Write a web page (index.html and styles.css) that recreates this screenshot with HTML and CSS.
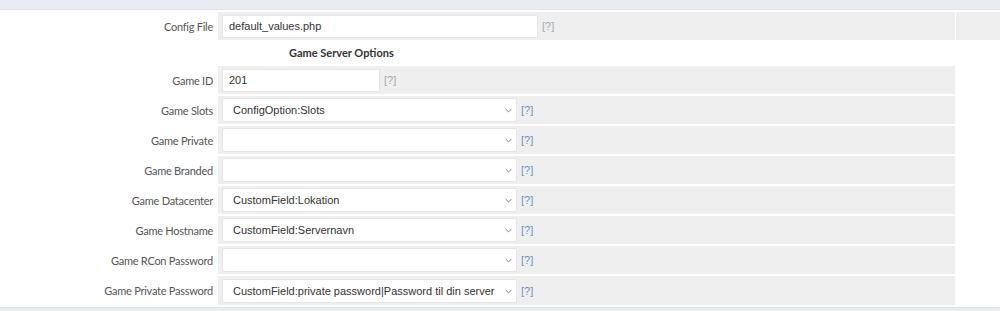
FILE: index.html
```html
<!DOCTYPE html>
<html lang="en">
<head>
    <meta charset="UTF-8">
    <title>Module Settings</title>
    <link rel="stylesheet" href="styles.css">
</head>
<body>
    <div class="topbar"></div>
    <div class="settings">
        <div class="row">
            <div class="label">Config File</div>
            <div class="field">
                <input type="text" class="text wide" value="default_values.php">
                <span class="help muted">[?]</span>
            </div>
            <div class="extra"></div>
        </div>
        <div class="section">Game Server Options</div>
        <div class="row">
            <div class="label">Game ID</div>
            <div class="field">
                <input type="text" class="text short" value="201">
                <span class="help muted">[?]</span>
            </div>
        </div>
        <div class="row">
            <div class="label">Game Slots</div>
            <div class="field">
                <div class="select"><select><option>ConfigOption:Slots</option></select><svg class="chev" viewBox="0 0 10 6"><path d="M1 1l4 4 4-4"/></svg></div>
                <span class="help">[?]</span>
            </div>
        </div>
        <div class="row">
            <div class="label">Game Private</div>
            <div class="field">
                <div class="select"><select><option></option></select><svg class="chev" viewBox="0 0 10 6"><path d="M1 1l4 4 4-4"/></svg></div>
                <span class="help">[?]</span>
            </div>
        </div>
        <div class="row">
            <div class="label">Game Branded</div>
            <div class="field">
                <div class="select"><select><option></option></select><svg class="chev" viewBox="0 0 10 6"><path d="M1 1l4 4 4-4"/></svg></div>
                <span class="help">[?]</span>
            </div>
        </div>
        <div class="row">
            <div class="label">Game Datacenter</div>
            <div class="field">
                <div class="select"><select><option>CustomField:Lokation</option></select><svg class="chev" viewBox="0 0 10 6"><path d="M1 1l4 4 4-4"/></svg></div>
                <span class="help">[?]</span>
            </div>
        </div>
        <div class="row">
            <div class="label">Game Hostname</div>
            <div class="field">
                <div class="select"><select><option>CustomField:Servernavn</option></select><svg class="chev" viewBox="0 0 10 6"><path d="M1 1l4 4 4-4"/></svg></div>
                <span class="help">[?]</span>
            </div>
        </div>
        <div class="row">
            <div class="label">Game RCon Password</div>
            <div class="field">
                <div class="select"><select><option></option></select><svg class="chev" viewBox="0 0 10 6"><path d="M1 1l4 4 4-4"/></svg></div>
                <span class="help">[?]</span>
            </div>
        </div>
        <div class="row last">
            <div class="label">Game Private Password</div>
            <div class="field">
                <div class="select"><select><option>CustomField:private password|Password til din server</option></select><svg class="chev" viewBox="0 0 10 6"><path d="M1 1l4 4 4-4"/></svg></div>
                <span class="help">[?]</span>
            </div>
        </div>
    </div>
    <div class="bottombar"></div>
</body>
</html>
```

FILE: styles.css
```css
body {
    margin: 0;
    background: #fff;
    font-family: 'Lato', sans-serif;
    font-size: 11px;
    color: #555;
    height: 311px;
    overflow: hidden;
}

.topbar {
    height: 9px;
    background: #e9edf1;
    border-bottom: 1px solid #dfe4e9;
    margin-bottom: 2px;
}

.bottombar {
    height: 6px;
    background: #e9edf1;
    border-top: 1px solid #dfe4e9;
    margin-top: 2px;
}

.row {
    display: flex;
    height: 28px;
    margin-bottom: 2px;
}

.row.last {
    height: 29px;
    margin-bottom: 0;
}

.label {
    width: 213px;
    padding-right: 5px;
    text-align: right;
    line-height: 29px;
    letter-spacing: -0.25px;
    white-space: nowrap;
}

.field {
    width: 733px;
    padding-left: 4px;
    background: #efefef;
    display: flex;
    align-items: center;
}

.extra {
    flex: 1;
    margin-left: 1px;
    background: #efefef;
}

.section {
    height: 22px;
    line-height: 22px;
    padding-left: 289px;
    margin-bottom: 2px;
    font-weight: 700;
    color: #333;
}

.text {
    box-sizing: border-box;
    height: 23px;
    border: 1px solid #e6e6e6;
    background: #fff;
    padding: 0 6px;
    font-family: 'Liberation Sans', Arial, sans-serif;
    font-size: 11px;
    color: #333;
    outline: none;
}

.text.wide {
    width: 316px;
}

.text.short {
    width: 158px;
}

.select {
    position: relative;
    width: 295px;
    height: 24px;
}

.select select {
    appearance: none;
    box-sizing: border-box;
    width: 100%;
    height: 100%;
    border: 1px solid #e6e6e6;
    border-radius: 2px;
    background: #fff;
    padding: 0 20px 0 10px;
    font-family: 'Liberation Sans', Arial, sans-serif;
    font-size: 11px;
    color: #333;
    outline: none;
}

.chev {
    position: absolute;
    right: 5px;
    top: 10px;
    width: 7px;
    height: 5px;
    fill: none;
    stroke: #666;
    stroke-width: 1.2;
}

.help {
    margin-left: 4px;
    font-family: 'Liberation Sans', Arial, sans-serif;
    font-size: 11px;
    color: #6b93c3;
}

.help.muted {
    color: #a3aab3;
}
```
